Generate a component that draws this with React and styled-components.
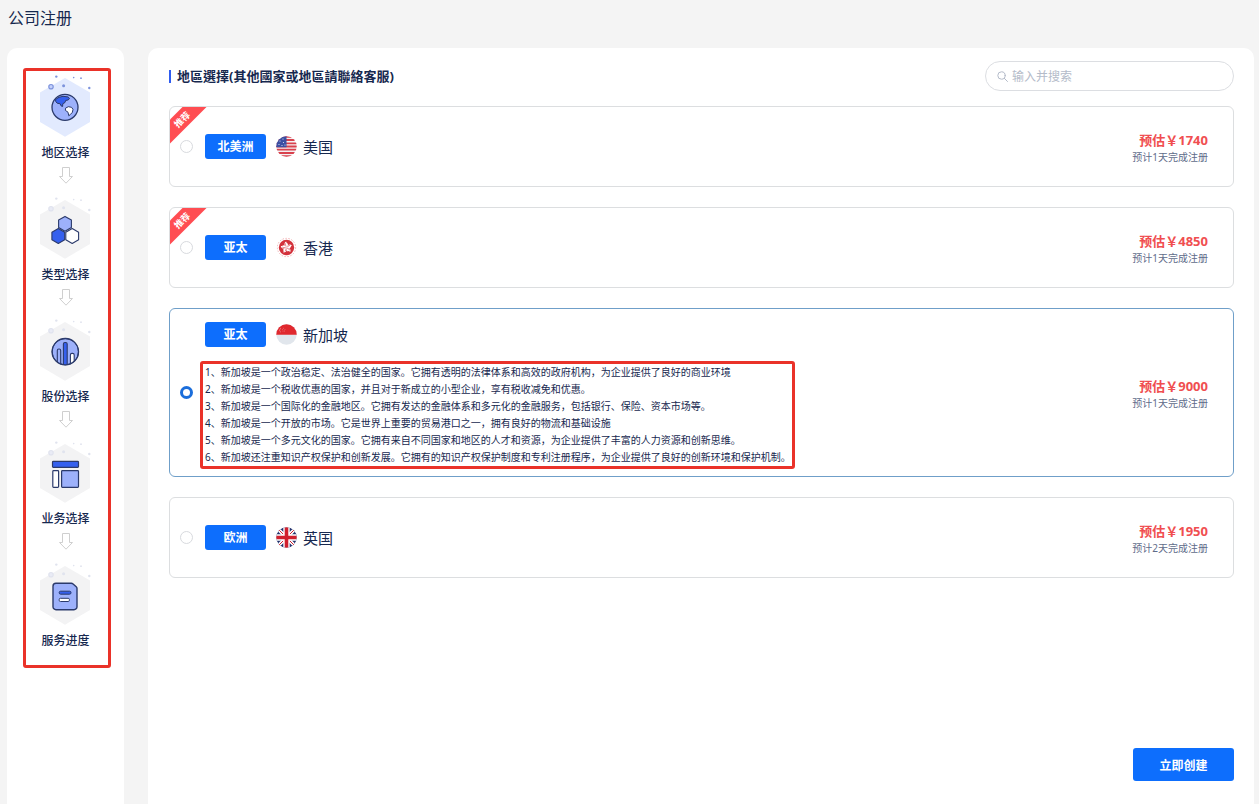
import React from "react";
import styled, { createGlobalStyle, css } from "styled-components";

const GlobalStyle = createGlobalStyle`
  * {
    box-sizing: border-box;
  }
  body {
    margin: 0;
    background: #f4f4f4;
    color: #16284f;
    font-family: "Noto Sans", "Noto Sans CJK SC", sans-serif;
  }
  button,
  input {
    font-family: inherit;
  }
`;

const Page = styled.div`
  display: flex;
  flex-direction: column;
  min-height: 100vh;
`;

const PageTitle = styled.h1`
  margin: 0;
  padding: 6px 8px 18px;
  font-size: 16px;
  font-weight: 400;
  line-height: 24px;
`;

const Columns = styled.div`
  display: flex;
  flex: 1;
  gap: 24px;
  padding: 0 5px 0 7px;
`;

const Sidebar = styled.aside`
  flex: 0 0 117px;
  padding: 20px 13px 20px 16px;
  background: #fff;
  border-radius: 10px 10px 0 0;
`;

const outline = css`
  border: 3px solid #ea3229;
  border-radius: 3px;
`;

const Steps = styled.ol`
  ${outline}
  display: flex;
  flex-direction: column;
  gap: 10px;
  margin: 0;
  padding: 1px 3px 16px 0;
  list-style: none;
`;

const Step = styled.li`
  display: flex;
  flex-direction: column;
  align-items: center;
  gap: 6px;
  font-size: 12px;
  font-weight: 500;
  line-height: 16px;
`;

const StepSvg = styled.svg`
  display: block;
  width: 60px;
  height: 66px;
  margin-bottom: 1px;
`;

const ArrowSvg = styled.svg`
  display: block;
  width: 16px;
  height: 17px;
`;

const Panel = styled.form`
  display: flex;
  flex: 1;
  flex-direction: column;
  min-width: 0;
  padding: 13px 20px 23px 21px;
  background: #fff;
  border-radius: 10px 10px 0 0;
`;

const PanelHeader = styled.header`
  display: flex;
  align-items: center;
  justify-content: space-between;
  margin-bottom: 15px;
`;

const PanelTitle = styled.h2`
  margin: 0;
  padding-left: 6px;
  border-left: 2px solid #2f5cf0;
  font-size: 13px;
  font-weight: 700;
  line-height: 13px;
`;

const SearchBox = styled.label`
  display: flex;
  align-items: center;
  gap: 4px;
  width: 249px;
  height: 30px;
  padding: 0 11px;
  border: 1px solid #dcdee2;
  border-radius: 15px;
`;

const SearchInput = styled.input`
  flex: 1;
  min-width: 0;
  padding: 0;
  border: 0;
  outline: 0;
  background: transparent;
  color: inherit;
  font-size: 12px;
  &::placeholder {
    color: #b4bbc9;
  }
`;

const RegionList = styled.div`
  display: flex;
  flex-direction: column;
  gap: 20px;
`;

const RegionCard = styled.label`
  position: relative;
  display: flex;
  align-items: center;
  min-height: 81px;
  padding: 7px 25px 7px 10px;
  overflow: hidden;
  border: 1px solid ${(props) => (props.$active ? "#6f9fc9" : "#dcdee0")};
  border-radius: 6px;
  cursor: pointer;
`;

const Ribbon = styled.span`
  position: absolute;
  top: 4px;
  left: -18px;
  width: 60px;
  background: #ff4d52;
  color: #fff;
  font-size: 9px;
  font-weight: 700;
  line-height: 17px;
  text-align: center;
  transform: rotate(-45deg);
`;

const Radio = styled.input`
  appearance: none;
  flex: none;
  width: 13px;
  height: 13px;
  margin: 0 12px 0 0;
  border: 1px solid #d8dade;
  border-radius: 50%;
  background: #fff;
  &:checked {
    border: 3px solid #1b6edb;
  }
`;

const RegionBody = styled.div`
  flex: 1;
  min-width: 0;
  padding-top: ${(props) => (props.$detailed ? "6px" : "0")};
`;

const RegionHead = styled.div`
  display: flex;
  align-items: center;
`;

const AreaTag = styled.span`
  width: 61px;
  margin-right: 10px;
  padding-top: 1px;
  border-radius: 3px;
  background: #0d6efd;
  color: #fff;
  font-size: 12px;
  font-weight: 700;
  line-height: 24px;
  text-align: center;
`;

const FlagSvg = styled.svg`
  width: 21px;
  height: 21px;
  margin-right: 6px;
`;

const RegionName = styled.span`
  font-size: 15px;
  line-height: 20px;
`;

const Notes = styled.ul`
  ${outline}
  width: fit-content;
  margin: 14px 0 0 -5px;
  padding: 0 1px 0 2px;
  list-style: none;
  font-size: 10px;
  line-height: 17px;
`;

const Quote = styled.div`
  padding-top: 4px;
  text-align: right;
`;

const Price = styled.div`
  color: #f04e50;
  font-size: 13px;
  font-weight: 700;
  line-height: 18px;
`;

const Duration = styled.div`
  color: #5f6c8a;
  font-size: 10px;
  line-height: 17px;
`;

const SubmitButton = styled.button`
  align-self: flex-end;
  width: 101px;
  height: 33px;
  margin-top: auto;
  padding: 0;
  border: 0;
  border-radius: 3px;
  background: #0d6efd;
  color: #fff;
  font-size: 12px;
  font-weight: 700;
  cursor: pointer;
`;

const INK = "#2b3a6b";
const LIGHT = "#9db1fb";
const BLUE = "#3560ee";

function GlobeGlyph() {
  return (
    <g stroke={INK} strokeLinejoin='round'>
      <circle cx='29' cy='35.3' r='13' fill={LIGHT} strokeWidth='1.3' />
      <path
        d='M19.5 27.5l3.5-2.2 4-1 5 .6 1.5 1.4-1.2 1.6-2.7.6-.6 2-2.2 1.2-.2 2.8-1.6-.7-.8-2-3-.6-1.4-1.5z'
        fill={BLUE}
        strokeWidth='1'
      />
      <path
        d='M29.5 36.2l2.8-1.5 3.2.6 1.5 2-.6 3-2.4 2.5-1.2 1-.8-3.6-2.6-1.8z'
        fill='#fff'
        strokeWidth='1'
      />
    </g>
  );
}

function HexagonsGlyph() {
  const hex = "M0-7.4L6.4-3.7V3.7L0 7.4-6.4 3.7V-3.7z";
  return (
    <g stroke={INK} strokeWidth='1.1' strokeLinejoin='round'>
      <path d={hex} transform='translate(29 29.8)' fill={LIGHT} />
      <path d={hex} transform='translate(22.3 42)' fill={BLUE} />
      <path d={hex} transform='translate(36.2 42)' fill='#fff' />
    </g>
  );
}

function ChartGlyph() {
  return (
    <g stroke={INK}>
      <clipPath id='chart-clip'>
        <circle cx='29.3' cy='35.7' r='13.2' />
      </clipPath>
      <circle cx='29.3' cy='35.7' r='13.2' fill={LIGHT} />
      <g clipPath='url(#chart-clip)' strokeWidth='1.1'>
        <rect x='21.3' y='33' width='3.4' height='20' rx='1.5' fill={LIGHT} />
        <rect x='27.4' y='26.5' width='3.8' height='26' rx='1.5' fill={BLUE} />
        <rect x='34.4' y='37.4' width='3.8' height='16' rx='1.5' fill='#fff' />
      </g>
      <circle cx='29.3' cy='35.7' r='13.2' fill='none' strokeWidth='1.3' />
    </g>
  );
}

function LayoutGlyph() {
  return (
    <g stroke={INK} strokeWidth='1.2'>
      <rect x='16.5' y='23.4' width='26' height='6' rx='.8' fill={BLUE} />
      <rect x='16.8' y='32.6' width='5.8' height='16.8' rx='.8' fill='#fff' />
      <rect x='25.6' y='32.6' width='16.9' height='16.8' rx='.8' fill={LIGHT} />
    </g>
  );
}

function DocumentGlyph() {
  return (
    <g stroke={INK} strokeLinejoin='round'>
      <path
        d='M20 23.3h15.3q1 0 1.8.7l3.100 2.800q.8.700.8 1.700v18.200a3 3 0 0 1-3 3H20a3 3 0 0 1-3-3V26.3a3 3 0 0 1 3-3z'
        fill={LIGHT}
        strokeWidth='1.4'
      />
      <rect x='23.2' y='31.2' width='11.8' height='3' rx='1.4' fill={BLUE} />
      <rect x='23.2' y='38.3' width='10.2' height='3.2' rx='1.2' fill='#fff' />
    </g>
  );
}

function StepIcon({ active, children }) {
  const dot = active ? "#7d93dc" : "#e0e3ee";
  return (
    <StepSvg viewBox='0 0 60 66' aria-hidden='true'>
      <path
        d='M29 6L54 20.5V50L29 64.7 4 50V20.5z'
        fill={active ? "#e2eafe" : "#f3f3f4"}
      />
      <g fill={dot}>
        <circle cx='20.3' cy='4.6' r='1.2' />
        <circle cx='37.7' cy='5.6' r='.8' />
        <circle cx='45' cy='6.2' r='.9' />
        <circle cx='53.3' cy='16' r='1.2' />
        <circle cx='27.6' cy='13.7' r='1.5' />
      </g>
      <circle
        cx='15'
        cy='14.7'
        r='2.2'
        fill={active ? "#c3d0fb" : "#e9ebf5"}
        stroke={dot}
        strokeWidth='1.2'
      />
      {children}
    </StepSvg>
  );
}

function StepArrow() {
  return (
    <ArrowSvg viewBox='0 0 16 17' aria-hidden='true'>
      <path d='M4.5.5h7v9h3L8 16.2 1.5 9.5h3z' fill='none' stroke='#cfcfcf' />
    </ArrowSvg>
  );
}

function UsFlag() {
  return (
    <>
      <path fill='#f3f1f3' d='M0 0h21v21H0z' />
      <path
        stroke='#d9414d'
        strokeWidth='1.8'
        d='M0 .8h21M0 4h21M0 7.3h21M0 10.5h21M0 13.7h21M0 17h21M0 20.2h21'
      />
      <path fill='#3b4fa3' d='M0 0h10.5v11.3H0z' />
      <g fill='#dfe4f5'>
        <circle cx='4' cy='5' r='.6' />
        <circle cx='7' cy='3' r='.6' />
        <circle cx='7.5' cy='6.5' r='.6' />
        <circle cx='3' cy='8.5' r='.6' />
        <circle cx='6' cy='9.5' r='.6' />
        <circle cx='9' cy='9' r='.6' />
      </g>
    </>
  );
}

function HkFlag() {
  return (
    <>
      <circle
        cx='10.5'
        cy='10.5'
        r='9.2'
        fill='none'
        stroke='#f0b0b3'
        strokeDasharray='1.5 1.5'
      />
      <circle cx='10.5' cy='10.5' r='7.7' fill='#d3323c' />
      {[0, 72, 144, 216, 288].map((angle) => (
        <g key={angle} transform={`rotate(${angle} 10.5 10.5)`}>
          <path
            d='M10.5 10.5C8.2 9.2 7.6 6 10.2 4.6c-.4 1.3 2.2 1.6 1.7 3.5-.3 1.1-.8 1.8-1.4 2.4z'
            fill='#fff'
          />
          <path
            d='M10.4 9.6C9.5 8.5 9.2 7.5 9.6 6.4'
            fill='none'
            stroke='#d3323c'
            strokeWidth='.6'
          />
        </g>
      ))}
    </>
  );
}

function SgFlag() {
  return (
    <>
      <path fill='#e1e6ec' d='M0 0h21v21H0z' />
      <path fill='#e0282e' d='M0 0h21v10.7H0z' />
      <path
        d='M5.2 3.6a3.1 3.1 0 0 0 0 5.4 3.6 3.6 0 0 1 0-5.4z'
        fill='#fff'
      />
      <g fill='#f3a9ab'>
        <circle cx='7.6' cy='4.2' r='.4' />
        <circle cx='9' cy='5.3' r='.4' />
        <circle cx='6.4' cy='5.3' r='.4' />
        <circle cx='7' cy='7' r='.4' />
        <circle cx='8.6' cy='7' r='.4' />
      </g>
    </>
  );
}

function UkFlag() {
  return (
    <>
      <path fill='#26346f' d='M0 0h21v21H0z' />
      <path stroke='#fff' strokeWidth='3.4' d='M0 0l21 21M21 0L0 21' />
      <path stroke='#d0202e' strokeWidth='1' d='M0 0l21 21M21 0L0 21' />
      <path stroke='#fff' strokeWidth='6.4' d='M10.5 0v21M0 10.5h21' />
      <path stroke='#d0202e' strokeWidth='3.6' d='M10.5 0v21M0 10.5h21' />
    </>
  );
}

const steps = [
  { label: "地区选择", Glyph: GlobeGlyph },
  { label: "类型选择", Glyph: HexagonsGlyph },
  { label: "股份选择", Glyph: ChartGlyph },
  { label: "业务选择", Glyph: LayoutGlyph },
  { label: "服务进度", Glyph: DocumentGlyph },
];

const regions = [
  {
    id: "us",
    area: "北美洲",
    name: "美国",
    Flag: UsFlag,
    price: 1740,
    days: 1,
    recommended: true,
  },
  {
    id: "hk",
    area: "亚太",
    name: "香港",
    Flag: HkFlag,
    price: 4850,
    days: 1,
    recommended: true,
  },
  {
    id: "sg",
    area: "亚太",
    name: "新加坡",
    Flag: SgFlag,
    price: 9000,
    days: 1,
    notes: [
      "新加坡是一个政治稳定、法治健全的国家。它拥有透明的法律体系和高效的政府机构，为企业提供了良好的商业环境",
      "新加坡是一个税收优惠的国家，并且对于新成立的小型企业，享有税收减免和优惠。",
      "新加坡是一个国际化的金融地区。它拥有发达的金融体系和多元化的金融服务，包括银行、保险、资本市场等。",
      "新加坡是一个开放的市场。它是世界上重要的贸易港口之一，拥有良好的物流和基础设施",
      "新加坡是一个多元文化的国家。它拥有来自不同国家和地区的人才和资源，为企业提供了丰富的人力资源和创新思维。",
      "新加坡还注重知识产权保护和创新发展。它拥有的知识产权保护制度和专利注册程序，为企业提供了良好的创新环境和保护机制。",
    ],
  },
  {
    id: "uk",
    area: "欧洲",
    name: "英国",
    Flag: UkFlag,
    price: 1950,
    days: 2,
  },
];

function Region({ region, checked, onSelect }) {
  const { id, Flag, notes } = region;
  return (
    <RegionCard $active={checked}>
      {region.recommended && <Ribbon>推荐</Ribbon>}
      <Radio
        type='radio'
        name='region'
        value={id}
        checked={checked}
        onChange={() => onSelect(id)}
      />
      <RegionBody $detailed={Boolean(notes)}>
        <RegionHead>
          <AreaTag>{region.area}</AreaTag>
          <FlagSvg viewBox='0 0 21 21' aria-hidden='true'>
            <clipPath id={`flag-${id}`}>
              <circle cx='10.5' cy='10.5' r='10.2' />
            </clipPath>
            <g clipPath={`url(#flag-${id})`}>
              <Flag />
            </g>
          </FlagSvg>
          <RegionName>{region.name}</RegionName>
        </RegionHead>
        {notes && (
          <Notes>
            {notes.map((note, index) => (
              <li key={note}>{`${index + 1}、${note}`}</li>
            ))}
          </Notes>
        )}
      </RegionBody>
      <Quote>
        <Price>{`预估￥${region.price}`}</Price>
        <Duration>{`预计${region.days}天完成注册`}</Duration>
      </Quote>
    </RegionCard>
  );
}

function App() {
  const [selected, setSelected] = React.useState("sg");

  return (
    <Page>
      <GlobalStyle />
      <PageTitle>公司注册</PageTitle>
      <Columns>
        <Sidebar>
          <Steps>
            {steps.map(({ label, Glyph }, index) => (
              <Step key={label}>
                <StepIcon active={index === 0}>
                  <Glyph />
                </StepIcon>
                <span>{label}</span>
                {index < steps.length - 1 && <StepArrow />}
              </Step>
            ))}
          </Steps>
        </Sidebar>
        <Panel onSubmit={(e) => e.preventDefault()}>
          <PanelHeader>
            <PanelTitle lang='zh-Hant'>
              地區選擇(其他國家或地區請聯絡客服)
            </PanelTitle>
            <SearchBox>
              <svg width='11' height='11' viewBox='0 0 11 11' aria-hidden='true'>
                <g fill='none' stroke='#b4bbc9' strokeLinecap='round'>
                  <circle cx='4.5' cy='4.5' r='3.7' />
                  <path d='M7.3 7.3l3.2 3.2' />
                </g>
              </svg>
              <SearchInput
                type='text'
                placeholder='输入并搜索'
                aria-label='输入并搜索'
              />
            </SearchBox>
          </PanelHeader>
          <RegionList>
            {regions.map((region) => (
              <Region
                key={region.id}
                region={region}
                checked={selected === region.id}
                onSelect={setSelected}
              />
            ))}
          </RegionList>
          <SubmitButton type='submit'>立即创建</SubmitButton>
        </Panel>
      </Columns>
    </Page>
  );
}

export default App;
